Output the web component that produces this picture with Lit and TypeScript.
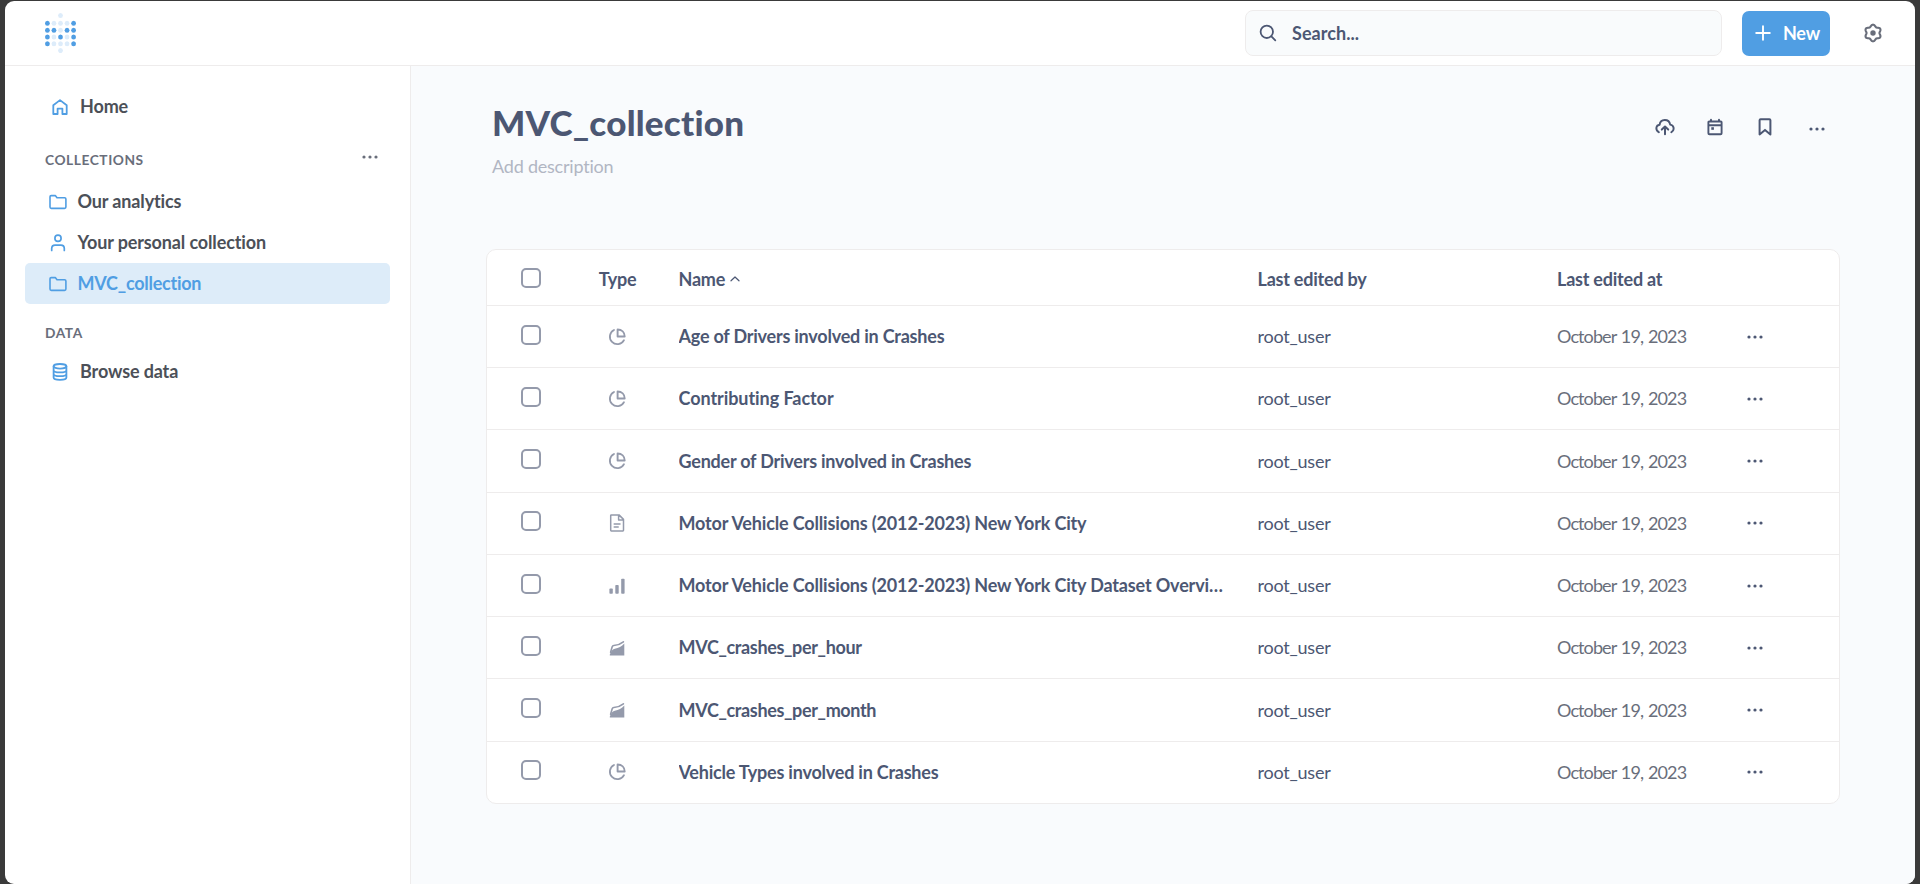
import { LitElement, html, svg, css } from "lit";
import { customElement, property } from "lit/decorators.js";

const gearOutline = (() => {
  const pts: string[] = [];
  for (let i = 0; i < 72; i++) {
    const a = (i / 72) * Math.PI * 2;
    const r = 7.4 + 0.95 * Math.cos(6 * a);
    pts.push(`${(10 + r * Math.sin(a)).toFixed(2)} ${(10 - r * Math.cos(a)).toFixed(2)}`);
  }
  return `M${pts.join("L")}Z`;
})();

const line = (d: string, w = 1.7) =>
  svg`<path d=${d} fill="none" stroke="currentColor" stroke-width=${w} stroke-linejoin="round" stroke-linecap="round"></path>`;

const icons: Record<string, unknown> = {
  home: line("M3.3 8.2L10 3.1L16.7 8.2V17H12.4V11.6H7.6V17H3.3Z", 1.8),
  folder: line("M2 4.8Q2 3.6 3.2 3.6H7.3L9 5.8H16.6Q17.9 5.8 17.9 7.1V15.1Q17.9 16.4 16.6 16.4H3.3Q2 16.4 2 15.1Z", 1.6),
  person: svg`<circle cx="10" cy="5.3" r="3.1" fill="none" stroke="currentColor" stroke-width="1.7"></circle>${line("M3.7 17.4V15.6Q3.7 12.2 7.1 12.2H12.9Q16.3 12.2 16.3 15.6V17.4")}`,
  database: svg`<ellipse cx="10" cy="4.3" rx="6.4" ry="2.3" fill="none" stroke="currentColor" stroke-width="1.8"></ellipse>${line("M3.6 4.3V15.6C3.6 18.7 16.4 18.7 16.4 15.6V4.3M3.6 8.2C3.6 11.1 16.4 11.1 16.4 8.2M3.6 12C3.6 14.9 16.4 14.9 16.4 12", 1.8)}`,
  search: svg`<circle cx="8.8" cy="8.8" r="6.2" fill="none" stroke="currentColor" stroke-width="1.8"></circle>${line("M13.4 13.4L17.3 17.3", 1.8)}`,
  plus: line("M10 3.2V16.8M3.2 10H16.8", 1.9),
  gear: svg`${line(gearOutline, 2.1)}<circle cx="10" cy="10" r="2.7" fill="currentColor"></circle>`,
  upload: svg`${line("M3.9 15.3C-0.3 12.6 1.2 8.2 4.6 7.8C5.3 1.5 14 1.3 15.2 7.6C19 8.3 20.1 12.8 16.3 15.3", 1.9)}${line("M10 17.3V10.3M6.8 12.6L10 9.6L13.2 12.6", 2)}`,
  calendar: svg`${line("M4.2 4.5H15.8Q16.6 4.5 16.6 5.3V16.2Q16.6 17.2 15.6 17.2H4.4Q3.4 17.2 3.4 16.2V5.3Q3.4 4.5 4.2 4.5ZM3.4 8.2H16.6M6 2.7V4.5M14 2.7V4.5", 1.9)}<rect x="6.3" y="10.2" width="2.6" height="2.6" fill="currentColor"></rect>`,
  bookmark: line("M4.6 3.2Q4.6 2.2 5.6 2.2H14.4Q15.4 2.2 15.4 3.2V17.4L10 12.9L4.6 17.4Z", 2),
  dots: svg`<circle cx="4" cy="10" r="1.6" fill="currentColor"></circle><circle cx="10" cy="10" r="1.6" fill="currentColor"></circle><circle cx="16" cy="10" r="1.6" fill="currentColor"></circle>`,
  pie: svg`${line("M7 3A7.5 7.5 0 1 0 17 13.2", 1.8)}<path d="M10.6 2.5V9.5H17.7C17.7 5.2 14.6 2.5 10.6 2.5Z" fill="none" stroke="currentColor" stroke-width="1.9" stroke-linejoin="round"></path>`,
  document: line("M4.3 1.9H12L16.5 6.4V17.3Q16.5 17.9 15.9 17.9H4.3Q3.7 17.9 3.7 17.3V2.5Q3.7 1.9 4.3 1.9ZM11.6 2V6.9H16.4M7.2 11.1H13M7.2 13.9H11.2", 1.5),
  bars: svg`<g fill="currentColor"><rect x="2.4" y="12.6" width="3.4" height="5.2" rx=".8"></rect><rect x="8.3" y="8.9" width="3.4" height="8.9" rx=".8"></rect><rect x="14.2" y="2.8" width="3.4" height="15" rx=".8"></rect></g>`,
  area: svg`<path d="M2.8 17.4V16.4Q5 10.9 7.8 10.7Q13.4 10 17.3 5.6V17.4Z" fill="currentColor"></path>${line("M3.6 14.2L5.2 8.8Q5.6 7.6 6.8 7.5Q12.4 7 16.4 3.8", 1.6)}`,
  caret: line("M6 11.8L10 8L14 11.8", 1.2),
};

@customElement("mb-icon")
class MbIcon extends LitElement {
  @property() name = "";
  static styles = css`
    :host { display: block; width: 20px; height: 20px; flex: none; }
    svg { display: block; overflow: visible; }
  `;
  render() {
    return html`<svg width="20" height="20" viewBox="0 0 20 20">${icons[this.name]}</svg>`;
  }
}

const items = [
  ["pie", "Age of Drivers involved in Crashes", ""],
  ["pie", "Contributing Factor", "loose"],
  ["pie", "Gender of Drivers involved in Crashes", ""],
  ["document", "Motor Vehicle Collisions (2012-2023) New York City", "open"],
  ["bars", "Motor Vehicle Collisions (2012-2023) New York City Dataset Overview", "open"],
  ["area", "MVC_crashes_per_hour", "tight"],
  ["area", "MVC_crashes_per_month", "tight"],
  ["pie", "Vehicle Types involved in Crashes", ""],
];

@customElement("app-root")
class AppRoot extends LitElement {
  static styles = css`
    :host {
      display: block; height: 884px; overflow: hidden; box-sizing: border-box;
      padding: 1px 5px 0; background: #3a3a3a;
      font: 700 18px/21px Lato, sans-serif; letter-spacing: -.22px; color: #4c5773;
      font-variant-ligatures: none;
    }
    * { box-sizing: border-box; }
    .window { height: 883px; display: flex; flex-direction: column; background: #fff; border-radius: 9px; overflow: hidden; }
    .top { height: 65px; flex: none; display: flex; align-items: center; border-bottom: 1px solid #eeecec; padding: 0 32px 12px 40px; }
    .logo { width: 31px; height: 40px; margin-top: 12px; margin-right: auto; }
    .search { width: 477px; height: 46px; margin-top: 12px; border: 1px solid #eeecec; border-radius: 8px; background: #f9fbfc; display: flex; align-items: center; padding: 0 0 0 12px; gap: 14px; letter-spacing: .05px; }
    .search mb-icon { margin-top: -1px; }
    .new { width: 88px; height: 45px; margin: 13px 33px 0 20px; border-radius: 7px; background: #509ee3; color: #fff; display: flex; align-items: center; padding: 0 0 1px 11px; gap: 10px; }
    .settings { color: #696e7b; margin-top: 12px; }
    .body { flex: 1; display: flex; min-height: 0; }
    .side { width: 406px; flex: none; border-right: 1px solid #eeecec; padding: 20px 20px 0; color: #4c5058; }
    .link { height: 41px; display: flex; align-items: center; padding-left: 23px; gap: 9.5px; border-radius: 5px; letter-spacing: -.13px; }
    .link mb-icon { color: #509ee3; }
    .wide { padding-left: 25px; gap: 10px; }
    .active { background: #ddecf9; color: #509ee3; letter-spacing: -.25px; }
    .head { display: flex; justify-content: space-between; align-items: center; font-size: 13.75px; line-height: 17px; color: #696e7b; letter-spacing: .55px; padding: 0 10px 0 20px; }
    .collections { margin: 24px 0 13px; height: 17px; }
    .collections mb-icon { margin-top: -6px; }
    .data { margin: 20px 0 10px; }
    .main { flex: 1; background: #f9fbfd; padding: 35px 75px 0; }
    .titlebar { display: flex; justify-content: space-between; height: 61px; padding: 0 13px 0 6px; }
    h1 { margin: 0; font-weight: 900; font-size: 35px; line-height: 42px; letter-spacing: .22px; }
    .actions { display: flex; gap: 30px; padding-top: 15.5px; }
    .actions .last { margin: 2.5px 0 0 2px; }
    .desc { margin: -6px 0 0 6px; font-weight: 400; color: #b1b6c3; height: 21px; }
    .table { margin-top: 72px; height: 555px; background: #fff; border: 1px solid #eeecec; border-radius: 10px; }
    .row { display: grid; grid-template-columns: 86px 87px 578px 299px 189px 1fr; height: 62.25px; border-top: 1px solid #eeecec; align-items: center; }
    .header { height: 54.9px; border-top: 0; padding-top: 4px; }
    .box { width: 20px; height: 20px; margin: -4px 0 0 34px; border: 2px solid #949aab; border-radius: 5px; }
    .header .box { margin-top: -2px; }
    .type { display: flex; justify-content: center; color: #949aab; }
    .header .type { color: inherit; padding-left: 2px; }
    .name { margin: 0 14px 0 18.5px; overflow: hidden; white-space: nowrap; text-overflow: ellipsis; }
    .loose { letter-spacing: -.06px; }
    .open { letter-spacing: -.16px; }
    .tight { letter-spacing: -.35px; }
    .sort { display: flex; }
    .by { padding-left: 19.5px; }
    .row:not(.header) .by, .row:not(.header) .at { font-weight: 400; }
    .at { padding-left: 20px; }
    .row:not(.header) .at { color: #696e7b; letter-spacing: -.9px; word-spacing: 1.2px; }
    .menu { padding-left: 19px; }
  `;
  logo() {
    const on = ["10001", "11011", "10101", "10001"];
    const dot = (x: number, y: number, lit: boolean) =>
      svg`<ellipse cx=${x} cy=${y} rx="2.4" ry="2.5" fill=${lit ? "#509ee3" : "#ddecfa"}></ellipse>`;
    return html`<svg class="logo" viewBox="0 0 31 40">
      ${dot(15.5, 2.5, false)}
      ${on.map((r, j) => [...r].map((c, i) => dot(2.4 + i * 6.55, 10.3 + j * 6.85, c === "1")))}
      ${dot(15.5, 37.6, false)}
    </svg>`;
  }
  render() {
    return html`<div class="window">
      <div class="top">
        ${this.logo()}
        <div class="search"><mb-icon name="search"></mb-icon><span>Search...</span></div>
        <div class="new"><mb-icon name="plus"></mb-icon><span>New</span></div>
        <mb-icon class="settings" name="gear"></mb-icon>
      </div>
      <div class="body">
        <div class="side">
          <div class="link wide"><mb-icon name="home"></mb-icon><span>Home</span></div>
          <div class="head collections"><span>COLLECTIONS</span><mb-icon name="dots"></mb-icon></div>
          <div class="link"><mb-icon name="folder"></mb-icon><span>Our analytics</span></div>
          <div class="link"><mb-icon name="person"></mb-icon><span>Your personal collection</span></div>
          <div class="link active"><mb-icon name="folder"></mb-icon><span>MVC_collection</span></div>
          <div class="head data"><span>DATA</span></div>
          <div class="link wide"><mb-icon name="database"></mb-icon><span>Browse data</span></div>
        </div>
        <div class="main">
          <div class="titlebar">
            <h1>MVC_collection</h1>
            <div class="actions">
              <mb-icon name="upload"></mb-icon><mb-icon name="calendar"></mb-icon>
              <mb-icon name="bookmark"></mb-icon><mb-icon class="last" name="dots"></mb-icon>
            </div>
          </div>
          <div class="desc">Add description</div>
          <div class="table">
            <div class="row header">
              <div class="box"></div><div class="type">Type</div>
              <div class="name sort">Name<mb-icon name="caret"></mb-icon></div>
              <div class="by">Last edited by</div><div class="at">Last edited at</div><div></div>
            </div>
            ${items.map(([icon, name, tracking]) => html`<div class="row">
              <div class="box"></div>
              <div class="type"><mb-icon name=${icon}></mb-icon></div>
              <div class="name ${tracking}">${name}</div>
              <div class="by">root_user</div>
              <div class="at">October 19, 2023</div>
              <div class="menu"><mb-icon name="dots"></mb-icon></div>
            </div>`)}
          </div>
        </div>
      </div>
    </div>`;
  }
}
